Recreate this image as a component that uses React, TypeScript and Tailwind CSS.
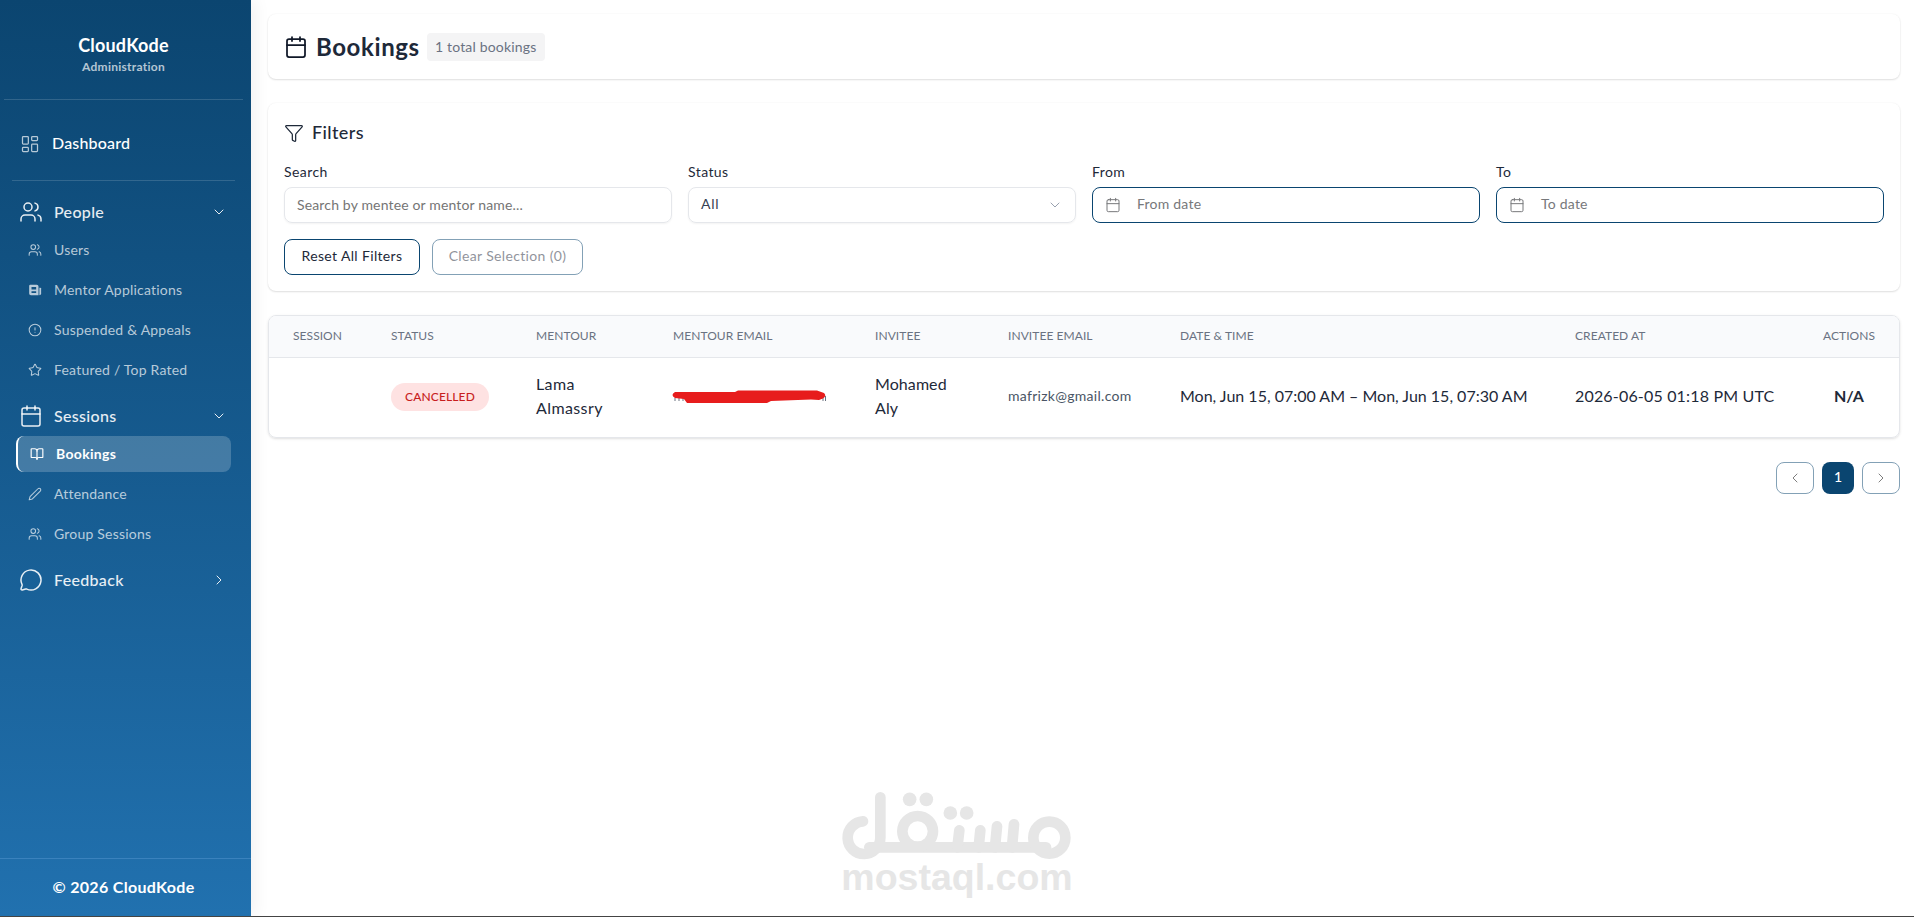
import type { ComponentType, ReactNode } from 'react';
import {
  BookOpen,
  Calendar,
  ChevronDown,
  ChevronLeft,
  ChevronRight,
  CircleAlert,
  Filter,
  LayoutDashboard,
  MessageCircle,
  Star,
  Users,
} from 'lucide-react';

interface IconProps {
  className?: string;
  strokeWidth?: number;
}

type Icon = ComponentType<IconProps>;

interface NavItem {
  label: string;
  icon: Icon;
  active?: boolean;
}

interface NavGroup {
  label: string;
  icon: Icon;
  items: NavItem[];
}

function NewspaperIcon({ className }: IconProps) {
  return (
    <svg viewBox="0 0 24 24" className={className} fill="currentColor">
      <path
        fillRule="evenodd"
        d="M4 3h11a3 3 0 0 1 3 3v15H5a3 3 0 0 1-3-3V5a2 2 0 0 1 2-2Zm2 4v4h8V7H6Zm0 7v3h8v-3H6Z"
      />
      <path d="M19.500 8H21a1.500 1.500 0 0 1 1.500 1.500V18a3 3 0 0 1-3 3V8Z" />
    </svg>
  );
}

function PencilIcon({ className, strokeWidth }: IconProps) {
  return (
    <svg
      viewBox="0 0 24 24"
      className={className}
      fill="none"
      stroke="currentColor"
      strokeWidth={strokeWidth}
      strokeLinecap="round"
      strokeLinejoin="round"
    >
      <path d="M17 3a2.83 2.83 0 1 1 4 4L7.500 20.500 2 22l1.500-5.500Z" />
    </svg>
  );
}

const navGroups: NavGroup[] = [
  {
    label: 'People',
    icon: Users,
    items: [
      { label: 'Users', icon: Users },
      { label: 'Mentor Applications', icon: NewspaperIcon },
      { label: 'Suspended & Appeals', icon: CircleAlert },
      { label: 'Featured / Top Rated', icon: Star },
    ],
  },
  {
    label: 'Sessions',
    icon: Calendar,
    items: [
      { label: 'Bookings', icon: BookOpen, active: true },
      { label: 'Attendance', icon: PencilIcon },
      { label: 'Group Sessions', icon: Users },
    ],
  },
  { label: 'Feedback', icon: MessageCircle, items: [] },
];

function NavLink({ label, icon: ItemIcon, active }: NavItem) {
  if (active) {
    return (
      <a className="flex h-9 items-center rounded-lg border-l-2 border-white bg-white/20 pl-3 text-sm font-bold tracking-[0.022em] text-white">
        <ItemIcon className="size-3.5" strokeWidth={2} />
        <span className="ml-3">{label}</span>
      </a>
    );
  }
  return (
    <a className="flex h-9 items-center pl-3 text-sm tracking-[0.015em] text-white/70">
      <ItemIcon className="size-3.5" strokeWidth={1.75} />
      <span className="ml-3">{label}</span>
    </a>
  );
}

function Sidebar() {
  return (
    <aside className="flex w-[251px] shrink-0 flex-col bg-linear-to-b from-[#0b4570] to-[#2171af] shadow-[4px_0_16px_rgba(0,0,0,0.06)]">
      <div className="mx-1 flex h-[100px] w-[239px] flex-col items-center border-b border-white/15 pt-8">
        <div className="text-lg leading-[26px] font-bold tracking-[0.01em] text-white">CloudKode</div>
        <div className="text-xs leading-[18px] font-bold tracking-[0.022em] text-white/70">Administration</div>
      </div>

      <div className="mx-3 flex h-[81px] w-[223px] items-center border-b border-white/15 pt-2 pl-2">
        <LayoutDashboard className="size-5 text-white/70" strokeWidth={1.5} />
        <span className="ml-3 pb-0.5 text-base font-medium tracking-[0.012em] text-white">Dashboard</span>
      </div>

      <nav className="flex w-[231px] flex-1 flex-col gap-2 pt-[11px] pl-4">
        {navGroups.map(({ label, icon: GroupIcon, items }) => (
          <div key={label}>
            <div className="flex h-10 items-center pr-1 pl-[3px] text-white/90">
              <GroupIcon className="size-6" strokeWidth={1.5} />
              <span className="ml-[11px] flex-1 text-base font-medium tracking-[0.02em]">{label}</span>
              {items.length > 0 ? (
                <ChevronDown className="size-4" strokeWidth={1.5} />
              ) : (
                <ChevronRight className="size-4" strokeWidth={1.5} />
              )}
            </div>
            <div className="flex flex-col gap-1">
              {items.map((item) => (
                <NavLink key={item.label} {...item} />
              ))}
            </div>
          </div>
        ))}
      </nav>

      <footer className="flex h-[58px] items-center justify-center border-t border-[#3a82bd] pr-1 pb-0.5 text-base font-bold tracking-[0.02em] text-white">
        © 2026 CloudKode
      </footer>
    </aside>
  );
}

function Field({ label, children }: { label: string; children: ReactNode }) {
  return (
    <div className="flex flex-col gap-[5px]">
      <label className="text-sm leading-5 tracking-[0.03em] text-gray-800">{label}</label>
      {children}
    </div>
  );
}

function DateButton({ placeholder }: { placeholder: string }) {
  return (
    <button className="flex h-9 items-center rounded-lg border border-[#0a4570] px-3 text-sm text-[#77787b]">
      <Calendar className="size-4" strokeWidth={1.5} />
      <span className="ml-4 pb-0.5 tracking-[0.016em]">{placeholder}</span>
    </button>
  );
}

function Filters() {
  return (
    <section className="mt-6 h-[188px] rounded-lg bg-white p-4 pt-3.5 shadow-[0_1px_2px_rgba(0,0,0,0.12),0_0_2px_rgba(0,0,0,0.05)]">
      <div className="flex h-8 items-center text-lg font-medium text-gray-800">
        <Filter className="size-5" strokeWidth={1.5} />
        <span className="ml-2 pb-0.5 tracking-[0.022em]">Filters</span>
      </div>
      <div className="mt-[13px] grid grid-cols-4 gap-4">
        <Field label="Search">
          <input
            className="h-9 rounded-lg border border-gray-200 px-3 pb-0.5 text-sm tracking-[0.011em] shadow-xs placeholder:text-[#757575]"
            placeholder="Search by mentee or mentor name..."
          />
        </Field>
        <Field label="Status">
          <button className="flex h-9 items-center justify-between rounded-lg border border-gray-200 px-3 text-sm text-gray-700 shadow-xs">
            <span className="pb-0.5 tracking-[0.05em]">All</span>
            <ChevronDown className="size-4 text-gray-400" strokeWidth={1.5} />
          </button>
        </Field>
        <Field label="From">
          <DateButton placeholder="From date" />
        </Field>
        <Field label="To">
          <DateButton placeholder="To date" />
        </Field>
      </div>
      <div className="mt-4 flex gap-3 text-sm tracking-[0.025em] text-gray-800">
        <button className="h-9 w-[136px] rounded-lg border border-[#0a4570] pb-0.5">Reset All Filters</button>
        <button className="h-9 w-[151px] rounded-lg border border-[#0a4570] pb-0.5 opacity-50">
          Clear Selection (0)
        </button>
      </div>
    </section>
  );
}

const columns = [
  { label: 'Session', width: 'w-[98px]' },
  { label: 'Status', width: 'w-[145px]' },
  { label: 'Mentour', width: 'w-[137px]' },
  { label: 'Mentour Email', width: 'w-[202px]' },
  { label: 'Invitee', width: 'w-[133px]' },
  { label: 'Invitee Email', width: 'w-[172px]' },
  { label: 'Date & Time', width: 'w-[395px]' },
  { label: 'Created At', width: 'w-[248px]' },
  { label: 'Actions', width: 'w-[100px]' },
];

// Email hidden behind a marker stroke
function RedactedEmail() {
  return (
    <svg viewBox="0 0 156 16" className="h-4 w-[156px]">
      <path d="M4 9v3M8 9v3M12 9v3M152 6v6M154.500 7v5" stroke="#6b7280" strokeWidth="1" />
      <path
        d="M4 3H64L67 1.500H146L153 4Q156 7 152 9.500L148 11L140 10.500L100 12L96 14H16L13 10L4 9Q-1 6 4 3Z"
        fill="#e71c1c"
      />
    </svg>
  );
}

function BookingsTable() {
  return (
    <div className="mt-6 overflow-hidden rounded-lg border border-gray-200 shadow-sm">
      <table className="w-full table-fixed text-left">
        <thead>
          <tr className="h-[41px] border-b border-gray-200 bg-[#f9fafc] text-xs tracking-[0.005em] text-gray-500 uppercase">
            {columns.map(({ label, width }) => (
              <th key={label} className={`${width} pb-px pl-6 font-normal whitespace-nowrap`}>
                {label}
              </th>
            ))}
          </tr>
        </thead>
        <tbody>
          <tr className="h-20 text-base text-gray-800">
            <td />
            <td className="pl-6">
              <span className="flex h-7 w-[98px] items-center justify-center rounded-full bg-[#fee2e2] text-xs font-medium tracking-[0.01em] text-[#c81e1e]">
                CANCELLED
              </span>
            </td>
            <td className="px-6 pb-0.5 tracking-[0.025em]">Lama Almassry</td>
            <td className="pl-[22px]">
              <RedactedEmail />
            </td>
            <td className="px-6 pb-0.5 tracking-[0.005em]">Mohamed Aly</td>
            <td className="pb-0.5 pl-6 text-sm tracking-[0.021em] text-gray-600">mafrizk@gmail.com</td>
            <td className="pb-0.5 pl-6">Mon, Jun 15, 07:00 AM – Mon, Jun 15, 07:30 AM</td>
            <td className="pb-0.5 pl-6 tracking-[0.011em]">2026-06-05 01:18 PM UTC</td>
            <td className="pb-0.5 text-center font-bold text-gray-800">N/A</td>
          </tr>
        </tbody>
      </table>
    </div>
  );
}

function Pagination() {
  return (
    <div className="mt-6 flex h-8 justify-end gap-2 text-sm">
      <button className="flex w-[38px] items-center justify-center rounded-lg border border-[#0a4570] opacity-50">
        <ChevronLeft className="size-4" strokeWidth={1.5} />
      </button>
      <button className="w-8 rounded-lg bg-[#0a4570] pb-0.5 font-medium text-white">1</button>
      <button className="flex w-[38px] items-center justify-center rounded-lg border border-[#0a4570] opacity-50">
        <ChevronRight className="size-4" strokeWidth={1.5} />
      </button>
    </div>
  );
}

function Watermark() {
  return (
    <div className="absolute top-[790px] left-[840px] flex w-[234px] flex-col items-center text-[#e6e6e6]">
      <svg viewBox="62 63 702 216" className="h-[72px] w-[234px]" fill="none" stroke="currentColor" strokeWidth="32" strokeLinecap="round">
        <path d="M131 157A49 49 0 1 0 183 206V85" />
        <path d="M150 235H680" />
        <circle cx="295" cy="187" r="46" />
        <circle cx="690" cy="206" r="48" />
        <path d="M420 184L414 235M483 184L478 235M533 172L527 235M584 166L578 235" />
        <g fill="currentColor" stroke="none">
          <circle cx="271" cy="91" r="20.500" />
          <circle cx="321" cy="91" r="20.500" />
          <circle cx="393" cy="132" r="20.500" />
          <circle cx="442" cy="132" r="20.500" />
        </g>
      </svg>
      <span className="-mt-1.5 font-['Liberation_Sans',sans-serif] text-[37.5px] leading-[43px] font-bold">mostaql.com</span>
    </div>
  );
}

export default function App() {
  return (
    <div className="relative flex h-[917px] w-[1914px] overflow-hidden border-b border-[#444] bg-white font-['Lato',sans-serif]">
      <Sidebar />
      <main className="flex-1 pt-3.5 pr-3.5 pl-[17px]">
        <header className="flex h-[65px] items-center rounded-lg bg-white px-4 shadow-[0_1px_2px_rgba(0,0,0,0.12),0_0_2px_rgba(0,0,0,0.05)]">
          <Calendar className="size-6 text-gray-900" strokeWidth={1.75} />
          <h1 className="ml-2 text-2xl font-bold tracking-[0.025em] text-gray-800">Bookings</h1>
          <span className="ml-[7px] flex h-7 w-[118px] items-center justify-center rounded-sm bg-[#f4f4f5] text-sm tracking-[0.012em] text-gray-500">
            1 total bookings
          </span>
        </header>
        <Filters />
        <BookingsTable />
        <Pagination />
      </main>
      <Watermark />
    </div>
  );
}
